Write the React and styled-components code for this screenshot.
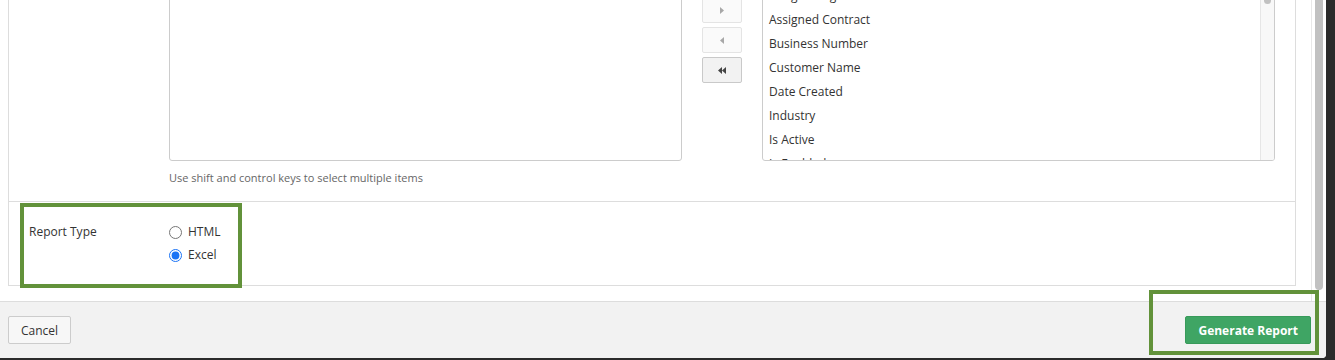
import React from "react";
import styled, { createGlobalStyle } from "styled-components";

const GlobalStyle = createGlobalStyle`
  html, body {
    margin: 0;
    height: 360px;
    overflow: hidden;
    background: #2b2b2b;
  }
  body {
    font-family: "Open Sans", "Liberation Sans", sans-serif;
    color: #333;
  }
`;

const Window = styled.div`
  position: relative;
  width: 1326px;
  height: 358px;
  background: #fff;
  border-bottom-right-radius: 4px;
  display: flex;
  flex-direction: column;
  overflow: hidden;
`;

const Body = styled.div`
  flex: 1;
  min-height: 0;
  display: flex;
  overflow: hidden;
`;

/* content is shown scrolled to its end, so it sits at the bottom */
const Content = styled.div`
  flex: 1;
  display: flex;
  flex-direction: column;
  justify-content: flex-end;
  padding: 0 15px 15px 8px;
  overflow: hidden;
`;

const Panel = styled.div`
  flex-shrink: 0;
  border: 1px solid #ddd;
  border-top: none;
`;

const Row = styled.div`
  display: flex;
  align-items: flex-start;
  padding: ${p => p.padding || "20px"};
  border-bottom: ${p => (p.last ? "none" : "1px solid #ddd")};
`;

const Label = styled.div`
  width: 140px;
  flex-shrink: 0;
  font-size: 12px;
  line-height: 20px;
  color: #333;
`;

const Picker = styled.div`
  flex: 1;
  display: flex;
  flex-direction: column;
`;

const DualList = styled.div`
  display: flex;
  align-items: flex-start;
`;

const SelectBox = styled.div`
  flex: 1;
  height: 256px;
  box-sizing: border-box;
  border: 1px solid #ccc;
  border-radius: 3px;
  background: #fff;
  display: flex;
  overflow: hidden;
`;

const Items = styled.ul`
  flex: 1;
  list-style: none;
  margin: 0;
  padding: 6px 0 0;
  overflow: hidden;
`;

const Item = styled.li`
  font-size: 12px;
  line-height: 24px;
  padding: 0 6px;
  color: #333;
  white-space: nowrap;
`;

const ListTrack = styled.div`
  width: 13px;
  border-left: 1px solid #e6e6e6;
  background: #f8f8f8;
  display: flex;
  justify-content: center;
`;

const ListThumb = styled.div`
  width: 7px;
  height: 96px;
  margin-top: 2px;
  background: #c1c1c1;
  border-radius: 4px;
`;

const Mover = styled.div`
  width: 40px;
  margin: 62px 20px 0;
  display: flex;
  flex-direction: column;
  gap: 4px;
`;

const MoveButton = styled.button`
  width: 40px;
  height: 26px;
  box-sizing: border-box;
  padding: 0;
  border: 1px solid ${p => (p.disabled ? "#e4e4e4" : "#c9c9c9")};
  border-radius: 2px;
  background: ${p => (p.disabled ? "#fafafa" : "#f2f2f2")};
  color: ${p => (p.disabled ? "#a8a8a8" : "#444")};
  display: flex;
  align-items: center;
  justify-content: center;
  cursor: ${p => (p.disabled ? "default" : "pointer")};
`;

const Hint = styled.div`
  margin-top: 9px;
  font-size: 11px;
  line-height: 16px;
  color: #666;
`;

const Options = styled.div`
  display: flex;
  flex-direction: column;
  gap: 3px;
`;

const Option = styled.label`
  display: flex;
  align-items: center;
  font-size: 12px;
  line-height: 20px;
  color: #333;
  input {
    width: 13px;
    height: 13px;
    margin: 0 6px 0 0;
    accent-color: #1a73f5;
  }
`;

const PageTrack = styled.div`
  width: 15px;
  border-left: 1px solid #e8e8e8;
  padding: 0 3px;
  box-sizing: border-box;
  flex-shrink: 0;
`;

const PageThumb = styled.div`
  height: calc(100% - 11px);
  background: #c1c1c1;
  border-radius: 0 0 4px 4px;
`;

const Footer = styled.div`
  height: 56px;
  flex-shrink: 0;
  border-top: 1px solid #ddd;
  background: #f2f2f2;
  display: flex;
  align-items: center;
  justify-content: space-between;
  padding: 0 15px 0 8px;
`;

const Button = styled.button`
  height: 28px;
  box-sizing: border-box;
  padding: 0 12px;
  font-family: "Open Sans", "Liberation Sans", sans-serif;
  font-size: 12px;
  border-radius: 2px;
  cursor: pointer;
  border: 1px solid #ccc;
  background: #f7f7f7;
  color: #333;
`;

const PrimaryButton = styled(Button)`
  font-weight: 700;
  padding: 0 12px;
  border-color: #389a5a;
  background: #3fa564;
  color: #fff;
`;

const Highlight = styled.div`
  position: absolute;
  box-sizing: border-box;
  border: 4px solid #62923a;
  pointer-events: none;
  left: ${p => p.x}px;
  top: ${p => p.y}px;
  width: ${p => p.w}px;
  height: ${p => p.h}px;
`;

const Caret = ({ dir }) => (
  <svg width="4" height="7" viewBox="0 0 4 7">
    <path d={dir === "right" ? "M0 0L4 3.5L0 7Z" : "M4 0L0 3.5L4 7Z"} fill="currentColor" />
  </svg>
);

const Double = ({ dir }) => (
  <svg width="8" height="7" viewBox="0 0 8 7">
    <path
      d={dir === "right" ? "M0 0L4 3.5L0 7ZM4 0L8 3.5L4 7Z" : "M4 0L0 3.5L4 7ZM8 0L4 3.5L8 7Z"}
      fill="currentColor"
    />
  </svg>
);

const fields = [
  "Account Name",
  "Account Number",
  "Address",
  "Assigned Agent",
  "Assigned Contract",
  "Business Number",
  "Customer Name",
  "Date Created",
  "Industry",
  "Is Active",
  "Is Enabled",
  "Last Modified",
];

export default function App() {
  return (
    <>
      <GlobalStyle />
      <Window>
        <Body>
          <Content>
            <Panel>
              <Row padding="20px 20px 15px">
                <Label />
                <Picker>
                  <DualList>
                    <SelectBox />
                    <Mover>
                      <MoveButton disabled><Double dir="right" /></MoveButton>
                      <MoveButton disabled><Caret dir="right" /></MoveButton>
                      <MoveButton disabled><Caret dir="left" /></MoveButton>
                      <MoveButton><Double dir="left" /></MoveButton>
                    </Mover>
                    <SelectBox>
                      <Items>
                        {fields.map(f => (
                          <Item key={f}>{f}</Item>
                        ))}
                      </Items>
                      <ListTrack>
                        <ListThumb />
                      </ListTrack>
                    </SelectBox>
                  </DualList>
                  <Hint>Use shift and control keys to select multiple items</Hint>
                </Picker>
              </Row>
              <Row last>
                <Label>Report Type</Label>
                <Options>
                  <Option>
                    <input type="radio" name="reportType" value="html" />
                    HTML
                  </Option>
                  <Option>
                    <input type="radio" name="reportType" value="excel" defaultChecked />
                    Excel
                  </Option>
                </Options>
              </Row>
            </Panel>
          </Content>
          <PageTrack>
            <PageThumb />
          </PageTrack>
        </Body>
        <Footer>
          <Button>Cancel</Button>
          <PrimaryButton>Generate Report</PrimaryButton>
        </Footer>
        <Highlight x={20} y={203} w={222} h={85} />
        <Highlight x={1149} y={290} w={170} h={65} />
      </Window>
    </>
  );
}
